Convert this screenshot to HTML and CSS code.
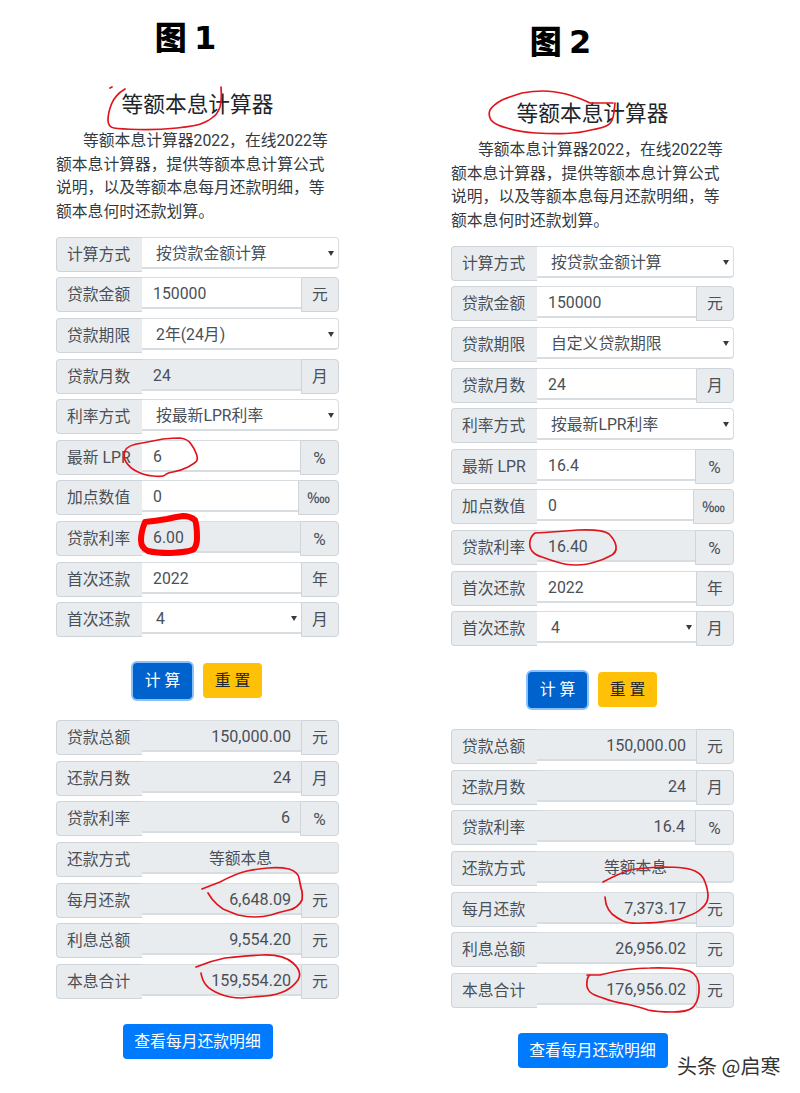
FILE: index.html
```html
<!DOCTYPE html>
<html lang="zh-CN">
<head>
<meta charset="utf-8">
<title>等额本息计算器</title>
<link rel="stylesheet" href="styles.css">
</head>
<body>
<main class="board">
  <section class="panel panel-one">
    <h2 class="fig fig-one">图 <span class="num">1</span></h2>
    <h1 class="title">等额本息计算器</h1>
    <p class="intro">等额本息计算器2022，在线2022等额本息计算器，提供等额本息计算公式说明，以及等额本息每月还款明细，等额本息何时还款划算。</p>
    <div class="group"><span class="label">计算方式</span><span class="field select end">按贷款金额计算</span></div>
    <div class="group"><span class="label">贷款金额</span><span class="field">150000</span><span class="addon">元</span></div>
    <div class="group"><span class="label">贷款期限</span><span class="field select end">2年(24月)</span></div>
    <div class="group"><span class="label">贷款月数</span><span class="field ro">24</span><span class="addon">月</span></div>
    <div class="group"><span class="label">利率方式</span><span class="field select end">按最新LPR利率</span></div>
    <div class="group"><span class="label">最新 LPR</span><span class="field">6</span><span class="addon pct">%</span></div>
    <div class="group"><span class="label">加点数值</span><span class="field">0</span><span class="addon wide">‱</span></div>
    <div class="group"><span class="label">贷款利率</span><span class="field ro">6.00</span><span class="addon pct">%</span></div>
    <div class="group"><span class="label">首次还款</span><span class="field">2022</span><span class="addon">年</span></div>
    <div class="group"><span class="label">首次还款</span><span class="field select">4</span><span class="addon">月</span></div>
    <div class="actions"><span class="btn primary">计 算</span><span class="btn warn">重 置</span></div>
    <div class="group"><span class="label">贷款总额</span><span class="field ro right">150,000.00</span><span class="addon">元</span></div>
    <div class="group"><span class="label">还款月数</span><span class="field ro right">24</span><span class="addon">月</span></div>
    <div class="group"><span class="label">贷款利率</span><span class="field ro right">6</span><span class="addon pct">%</span></div>
    <div class="group"><span class="label">还款方式</span><span class="field ro center end">等额本息</span></div>
    <div class="group"><span class="label">每月还款</span><span class="field ro right">6,648.09</span><span class="addon">元</span></div>
    <div class="group"><span class="label">利息总额</span><span class="field ro right">9,554.20</span><span class="addon">元</span></div>
    <div class="group"><span class="label">本息合计</span><span class="field ro right">159,554.20</span><span class="addon">元</span></div>
    <div class="detail"><span class="btn detail-btn">查看每月还款明细</span></div>
  </section>
  <section class="panel panel-two">
    <h2 class="fig fig-two">图 <span class="num">2</span></h2>
    <h1 class="title">等额本息计算器</h1>
    <p class="intro">等额本息计算器2022，在线2022等额本息计算器，提供等额本息计算公式说明，以及等额本息每月还款明细，等额本息何时还款划算。</p>
    <div class="group"><span class="label">计算方式</span><span class="field select end">按贷款金额计算</span></div>
    <div class="group"><span class="label">贷款金额</span><span class="field">150000</span><span class="addon">元</span></div>
    <div class="group"><span class="label">贷款期限</span><span class="field select end">自定义贷款期限</span></div>
    <div class="group"><span class="label">贷款月数</span><span class="field">24</span><span class="addon">月</span></div>
    <div class="group"><span class="label">利率方式</span><span class="field select end">按最新LPR利率</span></div>
    <div class="group"><span class="label">最新 LPR</span><span class="field">16.4</span><span class="addon pct">%</span></div>
    <div class="group"><span class="label">加点数值</span><span class="field">0</span><span class="addon wide">‱</span></div>
    <div class="group"><span class="label">贷款利率</span><span class="field ro">16.40</span><span class="addon pct">%</span></div>
    <div class="group"><span class="label">首次还款</span><span class="field">2022</span><span class="addon">年</span></div>
    <div class="group"><span class="label">首次还款</span><span class="field select">4</span><span class="addon">月</span></div>
    <div class="actions"><span class="btn primary">计 算</span><span class="btn warn">重 置</span></div>
    <div class="group"><span class="label">贷款总额</span><span class="field ro right">150,000.00</span><span class="addon">元</span></div>
    <div class="group"><span class="label">还款月数</span><span class="field ro right">24</span><span class="addon">月</span></div>
    <div class="group"><span class="label">贷款利率</span><span class="field ro right">16.4</span><span class="addon pct">%</span></div>
    <div class="group"><span class="label">还款方式</span><span class="field ro center end">等额本息</span></div>
    <div class="group"><span class="label">每月还款</span><span class="field ro right">7,373.17</span><span class="addon">元</span></div>
    <div class="group"><span class="label">利息总额</span><span class="field ro right">26,956.02</span><span class="addon">元</span></div>
    <div class="group"><span class="label">本息合计</span><span class="field ro right">176,956.02</span><span class="addon">元</span></div>
    <div class="detail"><span class="btn detail-btn">查看每月还款明细</span></div>
  </section>
</main>
<svg class="ink" width="800" height="1093" viewBox="0 0 800 1093" aria-hidden="true">
  <path d="M110 88l2-1M125 89Q115 95 111.5 104Q108 113 108 120Q108 127 114 128Q120 129 138 129.5Q157 130 177 128Q197 126 203 123Q210 120 213 117Q217 115 220 107Q222 100 221 87"/>
  <path d="M142 443Q127 445 125 451Q123 457 126 462Q130 468 136 471Q143 475 153 476Q163 477 165 475Q167 473 173 472Q180 471 188 467Q197 462 197 460Q198 458 196 453Q194 448 191 444Q188 439 180 438Q173 438 163 439Q153 441 142 443Z"/>
  <path class="thick" d="M145 522Q141 532 141 540Q141 548 148 551Q156 553 170 553Q190 552 194 549Q197 545 197 538Q197 525 195 520Q190 516 183 516Q175 517 167 519Q155 521 145 522Z"/>
  <path d="M202 889L220 882Q237 873 247 871Q257 869 268 868Q280 867 289 869Q298 872 299 878Q300 883 301 888Q303 892 302 900Q298 908 289 910Q280 912 271 915Q263 917 255 917Q247 917 238 915Q230 912 223 909Q217 905 212 899L208 893"/>
  <path d="M196 967Q210 961 225 958Q240 956 262 955Q283 954 293 963Q303 972 298 980Q293 987 285 991Q277 995 265 996Q253 997 241 998Q230 998 220 994Q210 990 206 985Q202 980 201 973"/>
  <path d="M613 103L590 103Q580 98 566 94Q553 91 543 91Q533 91 522 93Q512 96 502 100Q493 105 490 110Q488 115 491 120Q495 125 507 128Q520 132 536 133Q553 134 566 133.5Q580 133 591 130Q603 128 608 125Q613 122 614 112L615 103"/>
  <path d="M535 533Q553 532 578 530Q603 529 609 534Q615 540 616 546Q617 553 610 556Q603 560 595 562Q587 565 576 565Q565 565 557 562Q550 560 542 557Q535 555 532 551Q529 547 530 541Q531 536 535 533Z"/>
  <path d="M603 882Q620 873 630 870Q640 868 663 867Q687 867 695 871Q703 875 705 882Q708 890 708 896Q708 903 702 908Q697 913 688 916Q680 920 668 921Q657 923 643 923Q630 924 623 921Q617 918 612 914Q608 910 606 904L605 897"/>
  <path d="M587 975L600 975Q627 968 650 968Q688 967 694 974Q700 980 699 992Q698 1003 692 1008Q687 1012 672 1012Q657 1012 648 1010Q640 1007 626 1004Q613 1002 603 998Q593 995 590 992Q586 988 587 982Q587 977 590 975"/>
</svg>
<div class="mark">头条 @启寒</div>
</body>
</html>
```
FILE: styles.css
```css
* { box-sizing: border-box; }
html, body { margin: 0; padding: 0; background: #fff; }
body {
  width: 800px;
  height: 1093px;
  overflow: hidden;
  position: relative;
  font-family: Roboto, "Noto Sans CJK SC", sans-serif;
  font-size: 15.8px;
  color: #495057;
}
.board { display: flex; gap: 112px; padding-left: 56px; }
.panel { width: 283px; padding-top: 18px; }
.panel-two { padding-top: 27px; }
.fig {
  margin: 0;
  height: 36px;
  line-height: 34px;
  font-size: 32px;
  font-weight: 900;
  color: #000;
  text-align: center;
  font-family: "Noto Sans CJK SC", sans-serif;
  white-space: pre;
}
.num { font-family: "DejaVu Sans", sans-serif; font-weight: 700; }
.fig-one { padding-right: 24px; }
.fig-two { padding-right: 64px; margin-top: -5px; height: 41px; }
.title {
  margin: 36px 0 0;
  height: 30px;
  line-height: 30px;
  font-size: 21.7px;
  font-weight: 400;
  color: #212529;
  text-align: center;
}
.intro {
  margin: 9px 0 13px;
  width: 276px;
  font-size: 15.8px;
  line-height: 23.7px;
  text-indent: 27px;
  color: #343a40;
}
.group { display: flex; align-items: flex-start; height: 35px; margin-bottom: 5.6px; }
.label {
  flex: 0 0 86px;
  height: 35px;
  line-height: 34px;
  padding-left: 10px;
  background: #e9ecef;
  border: 1px solid #ced4da;
  border-right-width: 0;
  border-radius: 4px 0 0 4px;
  white-space: nowrap;
}
.field {
  flex: 1 1 auto;
  min-width: 0;
  height: 32px;
  line-height: 31px;
  padding: 0 10px 0 11px;
  background: #fff;
  border: 1px solid #d8dde1;
  border-width: 1px 0 2px;
  white-space: nowrap;
}
.field.ro { background: #e9ecef; }
.field.right { text-align: right; font-size: 16.1px; }
.field.center { text-align: center; }
.field.end { border-right-width: 1px; border-radius: 0 4px 4px 0; }
.field.select {
  position: relative;
  padding-left: 14px;
}
.field.select::after {
  content: "";
  position: absolute;
  right: 4px;
  top: 13px;
  border: 3px solid transparent;
  border-top: 5px solid #343a40;
  border-bottom-width: 0;
}
.addon {
  flex: 0 0 38px;
  height: 35px;
  line-height: 34px;
  text-align: center;
  background: #e9ecef;
  border: 1px solid #ced4da;
  border-radius: 0 4px 4px 0;
}
.addon.pct { flex-basis: 39px; font-size: 17px; }
.addon.wide { flex-basis: 41px; font-size: 15px; }
.actions {
  display: flex;
  justify-content: center;
  gap: 11px;
  margin: 26px 0 21px;
}
.btn {
  display: inline-block;
  height: 35px;
  line-height: 35px;
  border-radius: 4px;
  text-align: center;
  white-space: pre;
}
.primary {
  width: 59px;
  height: 36px;
  background: #0062cc;
  color: #fff;
  box-shadow: 0 0 0 2px #8cc0fb;
  line-height: 35px;
}
.warn { width: 59px; background: #ffc107; color: #212529; }
.detail { display: flex; justify-content: center; margin-top: 25.6px; }
.detail-btn { width: 150px; background: #007bff; color: #fff; }
.ink { position: absolute; left: 0; top: 0; pointer-events: none; }
.ink path {
  fill: none;
  stroke: #e0141c;
  stroke-width: 1.7;
  stroke-linejoin: round;
  stroke-linecap: round;
}
.ink path.thick { stroke: #f00; stroke-width: 6; }
.mark {
  position: absolute;
  left: 677px;
  top: 1054px;
  font-family: "Noto Sans CJK SC", sans-serif;
  font-size: 20px;
  line-height: 24px;
  color: #333;
  white-space: nowrap;
  text-shadow: 0 0 2px #fff;
}
```
